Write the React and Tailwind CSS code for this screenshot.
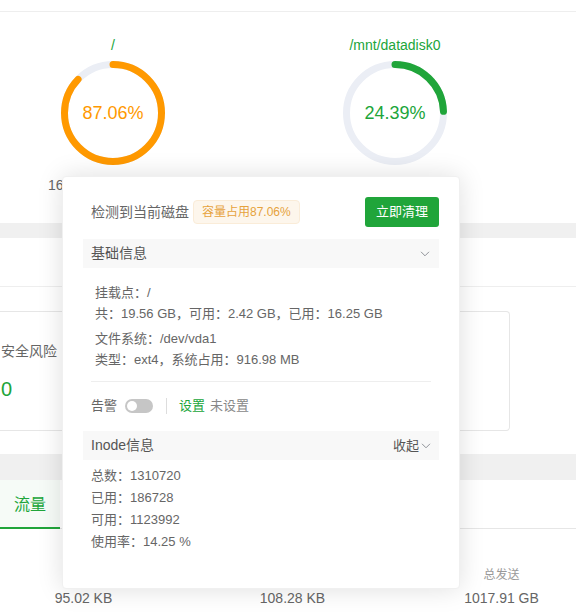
import React from 'react';

const font = { fontFamily: '"Liberation Sans", "Noto Sans CJK SC", sans-serif' };

// ring gauge, starts at 12 o'clock and runs clockwise
const Gauge = ({ percent, color }) => {
    const size = 104;
    const stroke = 7;
    const r = (size - stroke) / 2;
    const c = 2 * Math.PI * r;
    return (
        <div className="relative w-[104px] h-[104px]">
            <svg width={size} height={size} className="-rotate-90">
                <circle cx={size / 2} cy={size / 2} r={r} fill="none" stroke="#ebeef5" strokeWidth={stroke} />
                <circle
                    cx={size / 2}
                    cy={size / 2}
                    r={r}
                    fill="none"
                    stroke={color}
                    strokeWidth={stroke}
                    strokeLinecap="round"
                    strokeDasharray={c}
                    strokeDashoffset={c * (1 - percent / 100)}
                />
            </svg>
            <div className="absolute inset-0 flex items-center justify-center text-[18px]" style={{ color }}>
                {percent.toFixed(2)}%
            </div>
        </div>
    );
};

const Chevron = ({ className }) => (
    <svg width="10" height="6" viewBox="0 0 10 6" fill="none" stroke="#909399" strokeWidth="1" className={className}>
        <path d="M1 0.8 L5 4.8 L9 0.8" />
    </svg>
);

const DiskPopover = () => (
    <div className="absolute left-[62px] top-[176px] w-[398px] h-[413px] bg-white rounded border border-[#f0f0f0] shadow-[0_0_26px_rgba(0,0,0,0.13)] px-5 pt-5">
        <div className="flex items-center h-[30px] pl-2">
            <span className="text-[14px] text-[#666]">检测到当前磁盘</span>
            <span className="ml-1 h-[24px] px-[8px] flex items-center text-[12px] text-[#e6a23c] bg-[#fdf6ec] border border-[#faecd8] rounded">容量占用87.06%</span>
            <button className="ml-auto w-[74px] h-[30px] bg-[#20a53a] text-white text-[13px] rounded-[3px]">立即清理</button>
        </div>

        <div className="mt-3 h-[29px] bg-[#f8f8f8] flex items-center justify-between px-2 text-[14px] text-[#555]">
            <span>基础信息</span>
            <Chevron className="mr-[1px]" />
        </div>

        <div className="mt-[14px] pl-3 text-[13px] text-[#666] leading-[21px]">
            <div>挂载点：/</div>
            <div>共：19.56 GB，可用：2.42 GB，已用：16.25 GB</div>
            <div className="mt-1">文件系统：/dev/vda1</div>
            <div>类型：ext4，系统占用：916.98 MB</div>
        </div>

        <div className="mx-2 mt-[11px] border-t border-[#eee]"></div>

        <div className="mt-[14px] pl-2 h-[20px] flex items-center text-[13px]">
            <span className="text-[#666]">告警</span>
            <span className="ml-2 w-[28px] h-[14px] rounded-full bg-[#c6c6c6] relative">
                <span className="absolute left-[2px] top-[2px] w-[10px] h-[10px] rounded-full bg-white"></span>
            </span>
            <span className="ml-[13px] w-px h-[16px] bg-[#ddd]"></span>
            <span className="ml-3 text-[#20a53a]">设置</span>
            <span className="ml-[5px] text-[#888]">未设置</span>
        </div>

        <div className="mt-[15px] h-[29px] bg-[#f8f8f8] flex items-center justify-between px-2 text-[14px] text-[#555]">
            <span>Inode信息</span>
            <span className="flex items-center text-[13px]">
                收起
                <Chevron className="ml-[2px]" />
            </span>
        </div>

        <div className="mt-[5px] pl-2 text-[13px] text-[#666] leading-[22px]">
            <div>总数：1310720</div>
            <div>已用：186728</div>
            <div>可用：1123992</div>
            <div>使用率：14.25 %</div>
        </div>
    </div>
);

const App = () => {
    return (
        <div className="relative w-[576px] h-[616px] overflow-hidden bg-white" style={font}>
            <div className="h-[12px] border-b border-[#eee]"></div>

            {/* disks */}
            <div className="h-[211px] flex pl-[33px] gap-[122px]">
                <div className="w-[160px] flex flex-col items-center pt-[24px]">
                    <div className="h-[18px] leading-[18px] text-[14px] text-[#20a53a]">/</div>
                    <div className="mt-[7px]">
                        <Gauge percent={87.06} color="#ff9900" />
                    </div>
                    <div className="mt-[10px] h-[20px] leading-[20px] text-[14px] text-[#666] whitespace-nowrap">16.25 GB / 19.56 GB</div>
                </div>
                <div className="w-[160px] flex flex-col items-center pt-[24px]">
                    <div className="h-[18px] leading-[18px] text-[14px] text-[#20a53a]">/mnt/datadisk0</div>
                    <div className="mt-[7px]">
                        <Gauge percent={24.39} color="#20a53a" />
                    </div>
                    <div className="mt-[10px] h-[20px] leading-[20px] text-[14px] text-[#666] whitespace-nowrap">24.46 GB / 98.28 GB</div>
                </div>
            </div>

            <div className="h-[15px] bg-[#f0f0f0]"></div>

            {/* security overview */}
            <div className="pb-[23px]">
                <div className="h-[49px] border-b border-[#eee]"></div>
                <div className="mt-[24px] w-[510px] h-[120px] border border-l-0 border-[#e6e6e6] rounded-r-sm flex flex-col justify-center pl-[1px]">
                    <div className="text-[14px] text-[#666] leading-[20px]">安全风险</div>
                    <div className="mt-[16px] text-[20px] text-[#20a53a] leading-[24px]">0</div>
                </div>
            </div>

            <div className="h-[26px] bg-[#f0f0f0]"></div>

            {/* traffic */}
            <div className="flex h-[49px] border-b border-[#e6e6e6]">
                <div className="w-[60px] h-[49px] pt-[3px] bg-[#f6fbf7] border-b-2 border-[#20a53a] flex items-center justify-center text-[16px] text-[#20a53a]">流量</div>
            </div>
            <div className="flex pl-[9px] gap-[60px] pt-[37px]">
                {[
                    ['上行', '95.02 KB'],
                    ['下行', '108.28 KB'],
                    ['总发送', '1017.91 GB'],
                ].map(([label, value]) => (
                    <div key={label} className="w-[150px] flex flex-col items-center">
                        <div className="text-[12px] text-[#999] leading-[18px]">{label}</div>
                        <div className="mt-[4px] text-[14px] text-[#666] leading-[20px]">{value}</div>
                    </div>
                ))}
            </div>

            <DiskPopover />
        </div>
    );
};

export default App;
